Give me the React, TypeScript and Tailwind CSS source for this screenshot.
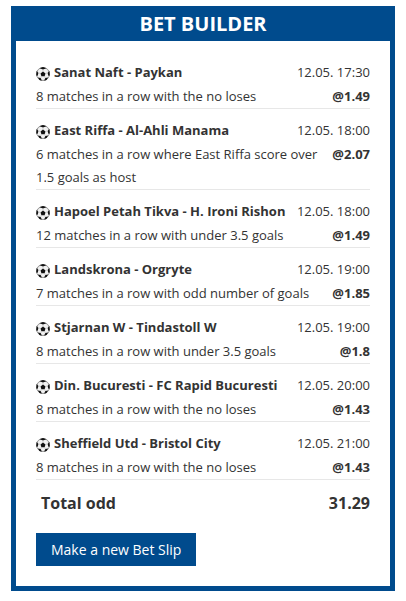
import React from "react";

type Bet = {
  match: string;
  date: string;
  tip: string;
  odd: string;
};

const bets: Bet[] = [
  { match: "Sanat Naft - Paykan", date: "12.05. 17:30", tip: "8 matches in a row with the no loses", odd: "@1.49" },
  { match: "East Riffa - Al-Ahli Manama", date: "12.05. 18:00", tip: "6 matches in a row where East Riffa score over 1.5 goals as host", odd: "@2.07" },
  { match: "Hapoel Petah Tikva - H. Ironi Rishon", date: "12.05. 18:00", tip: "12 matches in a row with under 3.5 goals", odd: "@1.49" },
  { match: "Landskrona - Orgryte", date: "12.05. 19:00", tip: "7 matches in a row with odd number of goals", odd: "@1.85" },
  { match: "Stjarnan W - Tindastoll W", date: "12.05. 19:00", tip: "8 matches in a row with under 3.5 goals", odd: "@1.8" },
  { match: "Din. Bucuresti - FC Rapid Bucuresti", date: "12.05. 20:00", tip: "8 matches in a row with the no loses", odd: "@1.43" },
  { match: "Sheffield Utd - Bristol City", date: "12.05. 21:00", tip: "8 matches in a row with the no loses", odd: "@1.43" },
];

const BallIcon = () => (
  <svg className="mt-[6px] h-[14px] w-[14px] shrink-0" viewBox="0 0 14 14" aria-hidden="true">
    <circle cx="7" cy="7" r="6.5" fill="#f1f1f1" stroke="#777" strokeWidth=".8" />
    <path d="M7 4.6 9.5 6.4 8.6 9.2H5.4L4.5 6.4Z" fill="#111" />
    <path d="M3.6 1.3 7 2.5 10.4 1.3 7 .1Z" fill="#111" />
    <path d="M.7 3.8 2.4 5.9 1.7 8.8.2 8.4Z" fill="#111" />
    <path d="M13.3 3.8 11.6 5.9 12.3 8.8 13.8 8.4Z" fill="#111" />
    <path d="M1.9 10.4 4.7 11.1 5.8 13.7 3.4 12.9Z" fill="#111" />
    <path d="M12.1 10.4 9.3 11.1 8.2 13.7 10.6 12.9Z" fill="#111" />
    <path d="M7 2.4V4.6M4.5 6.4 2.4 5.9M9.5 6.4 11.6 5.9M5.4 9.2 4.7 11.1M8.6 9.2 9.3 11.1" stroke="#aaa" strokeWidth=".5" />
  </svg>
);

export default function App() {
  return (
    <main className="px-[11px] py-[6px] font-['Open_Sans',sans-serif] text-[13px] leading-[23px] text-[#333]">
      <section className="border-[5px] border-t-0 border-[#004b8d] bg-white">
        <h1 className="bg-[#004b8d] text-center text-xl leading-[35px] font-bold text-white">BET BUILDER</h1>
        <div className="px-5 pt-5 pb-5">
          <ul>
            {bets.map((bet) => (
              <li key={bet.match} className="mb-[10px] border-b border-[#e7e7e7]">
                <div className="flex justify-between pb-px">
                  <h2 className="flex gap-1 font-bold">
                    <BallIcon />
                    {bet.match}
                  </h2>
                  <time className="shrink-0">{bet.date}</time>
                </div>
                <div className="flex justify-between gap-2">
                  <p>{bet.tip}</p>
                  <strong className="font-bold">{bet.odd}</strong>
                </div>
              </li>
            ))}
          </ul>
          <div className="flex justify-between pl-[5px] text-base leading-[26px] font-bold">
            <span>Total odd</span>
            <span>31.29</span>
          </div>
          <button type="button" className="mt-[17px] h-[33px] bg-[#004b8d] px-[15px] text-sm text-white">
            Make a new Bet Slip
          </button>
        </div>
      </section>
    </main>
  );
}
